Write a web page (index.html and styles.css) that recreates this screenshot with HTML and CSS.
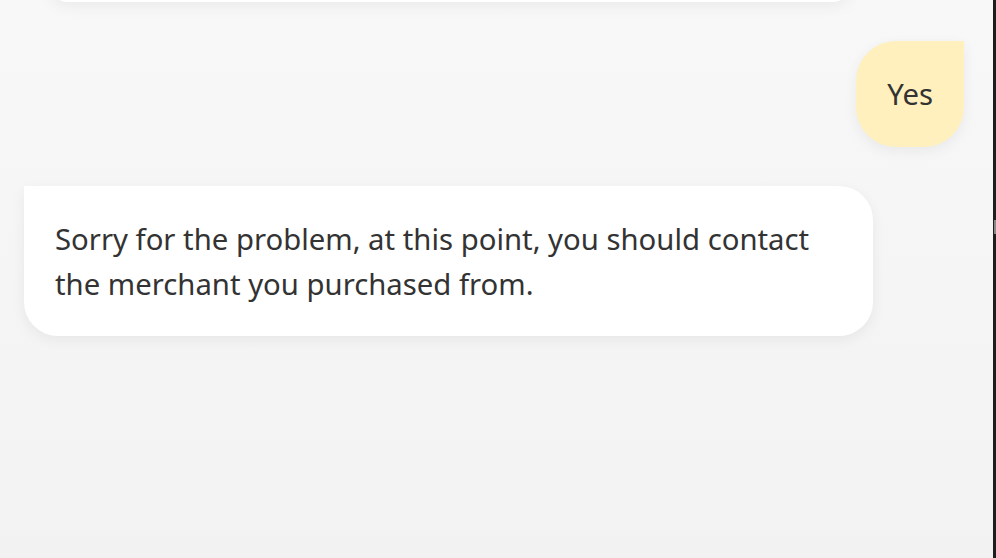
FILE: index.html
```html
<!DOCTYPE html>
<html lang="en">
<head>
<meta charset="utf-8">
<title>Chat</title>
<link rel="stylesheet" href="styles.css">
</head>
<body>
<div class="viewport">
  <main class="chat">
    <div class="card-tail"></div>
    <div class="row row-user">
      <div class="bubble bubble-user">Yes</div>
    </div>
    <div class="row row-bot">
      <div class="bubble bubble-bot">Sorry for the problem, at this point, you should contact the merchant you purchased from.</div>
    </div>
  </main>
  <div class="scrollbar"><span class="thumb"></span></div>
</div>
</body>
</html>
```
FILE: styles.css
```css
html, body {
  margin: 0;
  padding: 0;
  height: 100%;
}
body {
  font-family: "Noto Sans", "Open Sans", sans-serif;
  color: #333333;
  background: linear-gradient(#f8f8f8, #f2f2f2);
  overflow: hidden;
}
.viewport {
  display: flex;
  height: 558px;
}
.chat {
  flex: 1;
  display: flex;
  flex-direction: column;
  padding: 0 29px 0 24px;
}
.card-tail {
  margin: -38px 0 0 24px;
  width: 804px;
  height: 40px;
  background: #fff;
  border-radius: 24px;
  box-shadow: 0 4px 16px rgba(0,0,0,0.06);
  flex: none;
}
.row {
  display: flex;
}
.row-user {
  justify-content: flex-end;
  margin-top: 39px;
}
.row-bot {
  margin-top: 39px;
}
.bubble {
  font-size: 29.3px;
  line-height: 45px;
  box-shadow: 0 4px 14px rgba(0,0,0,0.06);
}
.bubble-user {
  padding: 31px 31px 30px;
  background: #fff0bd;
  border-radius: 40px 0 40px 40px;
}
.bubble-bot {
  padding: 31px 31px 29px;
  background: #fff;
  width: 787px;
  border-radius: 0 34px 34px 34px;
}
.scrollbar {
  width: 3px;
  background: #1e1e1e;
  position: relative;
}
.thumb {
  position: absolute;
  left: 1px;
  top: 220px;
  width: 2px;
  height: 14px;
  background: #888;
}
```
